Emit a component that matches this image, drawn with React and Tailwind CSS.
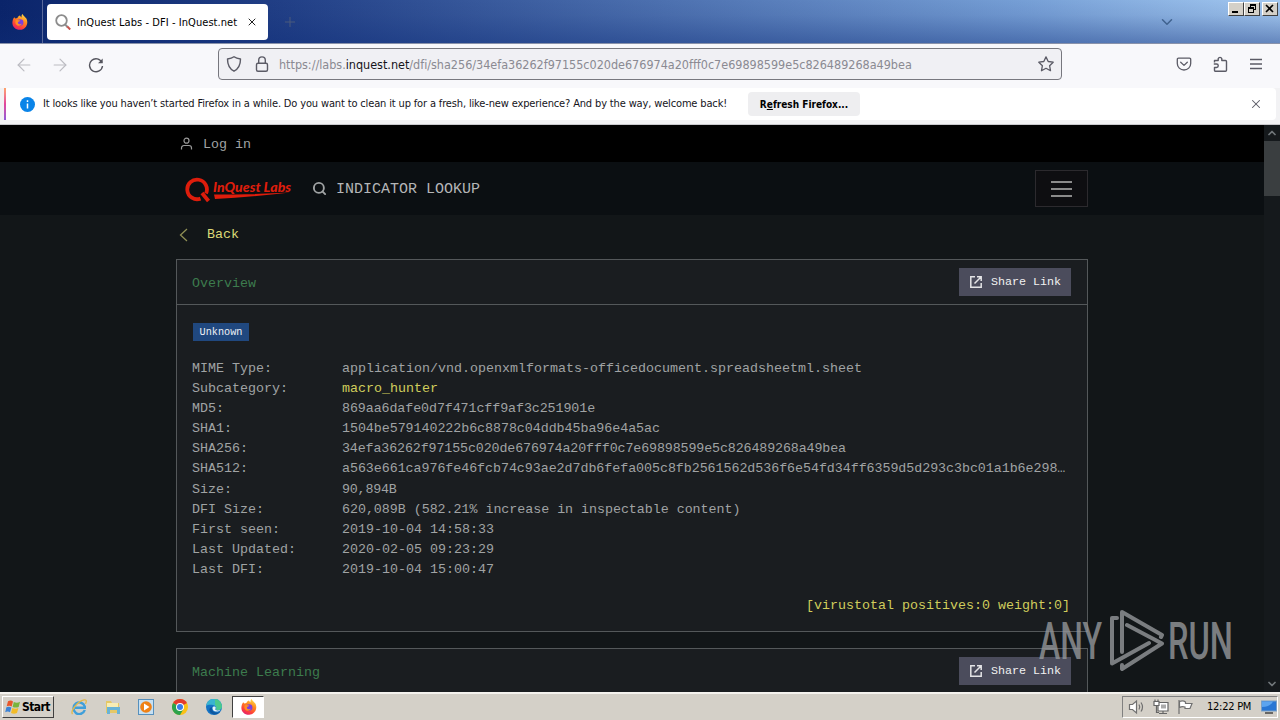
import React from 'react';
import { ArrowLeft, ArrowRight, ChevronDown, ChevronUp, Plus, Search, X } from 'lucide-react';

const details = [
  { label: 'MIME Type:', value: 'application/vnd.openxmlformats-officedocument.spreadsheetml.sheet' },
  { label: 'Subcategory:', value: 'macro_hunter', style: 'text-[#d0cd5c]' },
  { label: 'MD5:', value: '869aa6dafe0d7f471cff9af3c251901e', style: 'tracking-[-0.09px]' },
  { label: 'SHA1:', value: '1504be579140222b6c8878c04ddb45ba96e4a5ac', style: 'tracking-[-0.05px]' },
  { label: 'SHA256:', value: '34efa36262f97155c020de676974a20fff0c7e69898599e5c826489268a49bea', style: 'tracking-[-0.125px]' },
  { label: 'SHA512:', value: 'a563e661ca976fe46fcb74c93ae2d7db6fefa005c8fb2561562d536f6e54fd34ff6359d5d293c3bc01a1b6e298…', style: 'tracking-[-0.05px]' },
  { label: 'Size:', value: '90,894B', style: 'tracking-[-0.2px]' },
  { label: 'DFI Size:', value: '620,089B (582.21% increase in inspectable content)', style: 'tracking-[-0.03px]' },
  { label: 'First seen:', value: '2019-10-04 14:58:33' },
  { label: 'Last Updated:', value: '2020-02-05 09:23:29' },
  { label: 'Last DFI:', value: '2019-10-04 15:00:47' },
];

const FirefoxIcon = ({ id }) => (
  <svg className="w-4 h-4" viewBox="0 0 16 16">
    <defs>
      <linearGradient id={id} x1="0.8" y1="0" x2="0.3" y2="1">
        <stop offset="0" stopColor="#ffe24a" />
        <stop offset="0.4" stopColor="#ff8a1f" />
        <stop offset="0.75" stopColor="#ff4238" />
        <stop offset="1" stopColor="#e3206f" />
      </linearGradient>
    </defs>
    <path
      d="M2.2 3.2 3.4 4.6C4 4.2 4.8 4 5.4 4 6 2.6 7 1.8 8 1.6 8.2 2.4 8.8 3 9.6 3.4 9.2 2 9.6.8 10.6 0c.6 2 2.2 2.4 3 3.8.6.4 1 1 1.2 1.6 1.8 5-1.6 10.2-6.6 10.4C3.6 16 .2 12.6.4 8.6.5 6.5 1 4.8 2.2 3.2z"
      fill={`url(#${id})`}
    />
    <circle cx="8.200" cy="8.400" r="3.200" fill="#7a3fe0" />
    <path d="M3.800 6.200C5.200 5.600 7 6 8.400 6.600 7.600 7.800 6 7.600 5.800 8.800c.4 1.600 2.600 2 4 .8-.8 2.600-4.600 3-6 .4-.6-1.200-.6-2.600 0-3.800z" fill="#ff8f24" />
  </svg>
);

const ShareButton = () => (
  <button className="flex items-center w-28 h-7 pl-[10px] bg-[#4b4c5c] text-[#f2f2f2] text-[11.7px]">
    <svg className="w-[14px] h-[14px] mr-2" viewBox="0 0 14 14" fill="none" stroke="#e4e4e6" strokeWidth="1.5">
      <path d="M6 1.800H1.800v10.400h10.400V8M8 1.800h4.200V6M12 2 5.500 8.500" />
    </svg>
    <span className="pt-[2px]">Share Link</span>
  </button>
);

const TitleBar = () => (
  <div className="relative flex h-11 border-b border-[#8992aa] bg-[linear-gradient(to_bottom,rgba(15,40,110,0)_0%,rgba(15,40,110,0.08)_35%,rgba(15,45,120,0.42)_100%),linear-gradient(to_right,#0a246a_0%,#213f86_22%,#4d71b0_52%,#769fd6_80%,#a3c8f0_100%)]">
    <div className="w-[43px] h-[43px] pl-3 pt-[14px] border-r border-[#59699b]">
      <FirefoxIcon id="fxTab" />
    </div>
    <div className="mt-1 ml-1 w-[221px] h-9 rounded bg-white flex items-center pl-2">
      <svg className="w-4 h-4" viewBox="0 0 16 16" fill="none">
        <circle cx="6.500" cy="6.500" r="5.300" stroke="#8c8c8c" strokeWidth="1.800" />
        <path d="M10.500 10.800 12.500 13" stroke="#8c8c8c" strokeWidth="2" />
        <path d="M12.300 12.500 15.200 15.500" stroke="#c8534e" strokeWidth="2" />
      </svg>
      <span className="ml-[6px] mt-[2px] w-[161px] text-[11px] text-black tracking-[0.06px] whitespace-nowrap">InQuest Labs - DFI - InQuest.net</span>
      <X className="ml-[8px] w-3 h-3 text-[#222]" strokeWidth={2} />
    </div>
    <Plus className="mt-[14px] ml-[14px] w-4 h-4 text-[#4a5a7d]" strokeWidth={1.500} />
    <ChevronDown className="mt-[13px] ml-auto mr-[104px] w-[18px] h-[18px] text-[#40628f]" strokeWidth={2} />
    <div className="absolute right-[2px] top-[2px] flex">
      {['min', 'restore', 'close'].map((kind) => (
        <div
          key={kind}
          className={`w-4 h-[14px] bg-[#d4d0c8] border border-t-white border-l-white border-r-[#404040] border-b-[#404040] ${kind === 'close' ? 'ml-[2px]' : ''}`}
        >
          <svg className="w-[14px] h-3" viewBox="0 0 14 12" fill="none" stroke="#000" shapeRendering="crispEdges">
            {kind === 'min' && <path d="M3 9h6" strokeWidth="2" />}
            {kind === 'restore' && <path d="M5.500 4V1.500h5v5H9M5 2h6M3.500 4.500h5v5h-5zM3 5h6" />}
            {kind === 'close' && <path d="M3 2l7 7M10 2 3 9" strokeWidth="1.600" shapeRendering="auto" />}
          </svg>
        </div>
      ))}
    </div>
  </div>
);

const NavBar = () => (
  <div className="flex items-center h-11 bg-[#f8f8fb] pb-1">
    <ArrowLeft className="ml-[14px] mt-[2px] w-5 h-5 text-[#bcbcc2]" strokeWidth={1.400} />
    <ArrowRight className="ml-4 mt-[2px] w-5 h-5 text-[#bcbcc2]" strokeWidth={1.400} />
    <svg className="ml-[18px] mt-[2px] w-4 h-4" viewBox="0 0 16 16" fill="none" stroke="#55555e" strokeWidth="1.400">
      <path d="M14 5.600A6.500 6.500 0 1 0 14.500 9" />
      <path d="M14.700 1.500v4.700H10z" fill="#55555e" stroke="none" />
    </svg>
    <div className="ml-[114px] w-[844px] h-8 rounded border border-[#77777e] bg-[#f0f0f4] flex items-center">
      <svg className="ml-[7px] w-4 h-4" viewBox="0 0 16 16" fill="none" stroke="#5b5b66" strokeWidth="1.400" strokeLinejoin="round">
        <path d="M8 .8C6.200 2.200 3.800 2.800 1.500 3c0 5.500 1.500 9.600 6.500 12.200C13 12.600 14.500 8.500 14.500 3 12.200 2.800 9.800 2.200 8 .8z" />
      </svg>
      <svg className="ml-3 w-4 h-4" viewBox="0 0 16 16" fill="none" stroke="#5b5b66" strokeWidth="1.400">
        <rect x="2.500" y="7.200" width="11" height="8" rx="1.500" />
        <path d="M4.700 7V4.200a3.300 3.300 0 0 1 6.600 0V7" />
      </svg>
      <span className="ml-[9px] mt-[2px] text-[12.500px] text-[#8a8a92] whitespace-nowrap tracking-[-0.015px]">
        https://labs.<span className="text-[#15141a]">inquest.net</span>/dfi/sha256/34efa36262f97155c020de676974a20fff0c7e69898599e5c826489268a49bea
      </span>
      <svg className="ml-auto mr-[7px] w-4 h-4" viewBox="0 0 16 16" fill="none" stroke="#5b5b66" strokeWidth="1.300" strokeLinejoin="round">
        <path d="m8 .9 2.200 4.600 5 .7-3.600 3.500.9 5L8 12.300l-4.500 2.400.9-5L.8 6.200l5-.7z" />
      </svg>
    </div>
    <svg className="ml-[114px] w-4 h-4" viewBox="0 0 16 16" fill="none" stroke="#5b5b66" strokeWidth="1.300" strokeLinecap="round" strokeLinejoin="round">
      <path d="M2.500 2.200h11A1.200 1.200 0 0 1 14.700 3.400V7.500a6.700 6.500 0 0 1-13.400 0V3.400A1.200 1.200 0 0 1 2.500 2.200zM4.700 6.300 8 9.400l3.300-3.100" />
    </svg>
    <svg className="ml-5 w-4 h-4" viewBox="0 0 16 16" fill="none" stroke="#5b5b66" strokeWidth="1.400" strokeLinejoin="round">
      <path d="M2.500 6.500V4.500h3.700V2.700a1.900 1.900 0 0 1 3.600 0v1.800H13.500a1 1 0 0 1 1 1V14.300a1 1 0 0 1-1 1H3.500a1 1 0 0 1-1-1V11.500h2a1.700 1.700 0 0 0 0-3.500H1.800" />
    </svg>
    <svg className="ml-5 w-4 h-4" viewBox="0 0 16 16" stroke="#5b5b66" strokeWidth="1.300">
      <path d="M2 3.500h12M2 8h12M2 12.500h12" />
    </svg>
  </div>
);

const Notification = () => (
  <div className="h-[37px] bg-[#f2f2f4] border-b border-[#c9c9cd]">
    <div className="flex items-center h-8 ml-1 mr-1 rounded bg-white">
      <div className="w-[2px] h-8 bg-gradient-to-b from-[#ffa36a] via-[#e2459b] to-[#9059d8]" />
      <svg className="ml-[14px] w-[15px] h-[15px]" viewBox="0 0 15 15">
        <circle cx="7.500" cy="7.500" r="7.500" fill="#0a84e8" />
        <path d="M7.500 6.500v5M7.500 3.300v1.600" stroke="#fff" strokeWidth="1.500" />
      </svg>
      <span className="ml-2 w-[685px] text-[11px] text-[#15141a] whitespace-nowrap tracking-[-0.148px]">
        It looks like you haven’t started Firefox in a while. Do you want to clean it up for a fresh, like-new experience? And by the way, welcome back!
      </span>
      <button className="ml-5 w-28 h-6 rounded bg-[#eeeef0] text-[10px] font-bold text-black">
        R<u>e</u>fresh Firefox...
      </button>
      <X className="ml-auto mr-[13px] w-[14px] h-[14px] text-[#5b5b66]" strokeWidth={1.800} />
    </div>
  </div>
);

const CardHeader = ({ title }) => (
  <div className="flex items-center justify-between h-[44px] pl-[15px] pr-4">
    <h2 className="pt-[3px] text-[#3d7c4e]">{title}</h2>
    <ShareButton />
  </div>
);

const WebPage = () => (
  <div className="flex h-[567px] overflow-hidden bg-[#121618]">
    <div className="w-[1264px] font-['Liberation_Mono',monospace] text-[13.333px] text-[#a0a3a4]">
      <div className="h-[37px] bg-black">
        <div className="w-[912px] h-full mx-auto flex items-center pl-1">
          <svg className="w-[13px] h-[13px] mr-[10px]" viewBox="0 0 13 13" fill="none" stroke="#999" strokeWidth="1.200">
            <circle cx="6.500" cy="3.700" r="2.500" />
            <path d="M1.500 12.500V11a2.500 2.500 0 0 1 2.500-2.500h5a2.500 2.500 0 0 1 2.500 2.500v1.500" />
          </svg>
          <span className="pt-[2px]">Log in</span>
        </div>
      </div>
      <div className="h-[53px] bg-[#0b0f12]">
        <div className="w-[912px] h-full mx-auto flex items-center">
          <svg className="ml-[9px] w-[108px] h-[28px]" viewBox="0 0 108 28">
            <path d="M15.500 23.600A9.800 9.800 0 1 1 21 18.500" fill="none" stroke="#dd1d0c" strokeWidth="3.800" />
            <path d="M17 18 23.500 26" stroke="#dd1d0c" strokeWidth="3.800" />
            <text x="28" y="16.500" textLength="78" lengthAdjust="spacingAndGlyphs" fill="#dd1d0c" fontFamily="Lato" fontSize="13" fontWeight="900" fontStyle="italic">InQuest Labs</text>
            <path d="M29 19.500Q70 19.500 105 17.500Q65 22 30 24z" fill="#dd1d0c" />
          </svg>
          <Search className="ml-[19px] w-[15px] h-[15px] text-[#a0a3a4]" strokeWidth={3} />
          <span className="ml-[9px] pt-[3px] text-[15px] text-[#b4b6b7]">INDICATOR LOOKUP</span>
          <button className="ml-auto w-[53px] h-[37px] border border-[#2c2a2e] bg-[#0e0e11] flex flex-col items-center justify-center gap-[5px]">
            <span className="w-[21px] h-[2px] bg-[#8b8b8b]" />
            <span className="w-[21px] h-[2px] bg-[#8b8b8b]" />
            <span className="w-[21px] h-[2px] bg-[#8b8b8b]" />
          </button>
        </div>
      </div>
      <div className="w-[912px] mx-auto">
        <div className="flex items-center h-[44px] pb-1 text-[#dcd977]">
          <svg className="ml-[3px] mr-[19px] w-[9px] h-[14px]" viewBox="0 0 9 14" fill="none" stroke="#8f8f55" strokeWidth="1.300">
            <path d="M8 1 1.500 7 8 13" />
          </svg>
          Back
        </div>
        <div className="h-[373px] border border-[#54585a] bg-[#1a1d20]">
          <CardHeader title="Overview" />
          <div className="border-t border-[#54585a] pt-[18px] px-[15px]">
            <div className="ml-px w-14 h-[18px] bg-[#20487f] text-[#eef1f5] text-[10.200px] leading-[20px] text-center">Unknown</div>
            <div className="mt-[17.500px]">
              {details.map((row) => (
                <div key={row.label} className="flex h-[20.170px] items-center">
                  <span className="w-[150px] shrink-0">{row.label}</span>
                  <span className={row.style}>{row.value}</span>
                </div>
              ))}
            </div>
            <div className="mt-[16px] mr-[2px] text-right text-[#d0cd5c]">[virustotal positives:0 weight:0]</div>
          </div>
        </div>
        <div className="mt-4 h-[60px] border border-[#54585a] bg-[#1a1d20]">
          <CardHeader title="Machine Learning" />
        </div>
      </div>
    </div>
    <div className="w-4 bg-[#15191c] flex flex-col items-center">
      <ChevronUp className="w-3 h-4 text-[#70767a]" strokeWidth={3.500} />
      <div className="w-4 h-[55px] bg-[#3a3e40]" />
      <ChevronDown className="mt-auto w-3 h-4 text-[#70767a]" strokeWidth={3.500} />
    </div>
  </div>
);

const Watermark = () => (
  <svg className="absolute left-[1036px] top-[600px] w-[200px] h-[80px] opacity-80" viewBox="1036 600 200 80" fill="none" stroke="#94979a" strokeWidth="4" strokeLinejoin="round" strokeLinecap="round">
    <text x="1039" y="659" textLength="63" lengthAdjust="spacingAndGlyphs" fill="#94979a" stroke="none" fontFamily="Roboto" fontSize="51" fontWeight="500">ANY</text>
    <path d="M1117 618H1112V663.500L1149 643M1122 652V612L1162 635 1161 637M1127 625 1162 643.500 1122 669V665" />
    <text x="1168" y="659" textLength="65" lengthAdjust="spacingAndGlyphs" fill="#94979a" stroke="none" fontFamily="Roboto" fontSize="51" fontWeight="500">RUN</text>
  </svg>
);

const Taskbar = () => (
  <div className="flex items-center h-7 bg-[#d4d0c8] border-t-2 border-[#f4f2ee] text-[11px] text-black">
    <button className="ml-[2px] w-[52px] h-[22px] flex items-center pl-[2px] border border-t-white border-l-white border-r-[#404040] border-b-[#404040] text-[12px] font-bold tracking-[-0.6px]">
      <svg className="w-4 h-4 mr-px shrink-0" viewBox="0 0 16 16">
        <path d="M3 2.200Q6 .8 8 2.500L6.700 7.500Q4.500 6 1.700 7.200z" fill="#e8572b" />
        <path d="M8.800 3Q12 4.400 15 2.800L13.700 8Q11 9.200 7.600 8z" fill="#79b43c" />
        <path d="M1.400 8.200Q4 7 6.400 8.500L5 13.300Q3 12 .2 13.200z" fill="#3c83d6" />
        <path d="M7.300 9Q10.500 10.300 13.400 9L12 14Q9 15.400 6 14z" fill="#f3bc28" />
      </svg>
      Start
    </button>
    <svg className="ml-[17px] w-4 h-4" viewBox="0 0 16 16" fill="none">
      <path d="M13.800 11A5.800 5.800 0 1 1 13.800 7.500v1.200H4" stroke="#3f9fda" strokeWidth="2.400" />
      <path d="M1.500 15.200C-1 12 7 2 13 .9c3-.5 2.500 2 1.500 4" stroke="#e2b84a" strokeWidth="1.300" />
    </svg>
    <svg className="ml-[18px] w-4 h-4" viewBox="0 0 16 16">
      <path d="M1 2h5l1 2h7v10H1z" fill="#e5c866" />
      <path d="M2 4h11v5H2z" fill="#f8edb4" />
      <path d="M2 8h13v7h-3v-4H5v4H2z" fill="#69b3d6" />
    </svg>
    <svg className="ml-[17px] w-4 h-4" viewBox="0 0 16 16">
      <rect x=".5" y=".5" width="15" height="15" fill="#c7e0f2" stroke="#5690bd" />
      <circle cx="8" cy="8" r="5.800" fill="#ef8115" />
      <path d="M6 4.500v7L11.500 8z" fill="#fff" />
    </svg>
    <svg className="ml-[18px] w-4 h-4" viewBox="0 0 16 16">
      <circle cx="8" cy="8" r="8" fill="#fbc116" />
      <path d="M8 8 1.070 4A8 8 0 0 1 14.930 4z" fill="#e33b2e" />
      <path d="M8 8 1.070 4A8 8 0 0 0 8 16l3.500-6z" fill="#2ba24c" />
      <circle cx="8" cy="8" r="4" fill="#fff" />
      <circle cx="8" cy="8" r="3" fill="#3a7de8" />
    </svg>
    <svg className="ml-[18px] w-4 h-4" viewBox="0 0 16 16">
      <circle cx="8" cy="8" r="8" fill="#1473c4" />
      <path d="M.3 7A7.800 7.800 0 0 1 15.900 7.500C16 10.500 13 11.500 10 10.800 11 9 9.500 6 6 5.800 3 5.600 1 6 .3 7z" fill="#39b4d0" />
      <path d="M9 .1A7.800 7.800 0 0 1 15.900 7.500C16 10.500 13 11.500 10 10.800 11 9 10.500 7 9 6z" fill="#4cc98c" />
      <path d="M6 8c-1 4 3 7 8 5-3 3.500-8 3-10 0-1.300-2-.5-4.500 2-5z" fill="#0c57a0" />
      <path d="M6.500 8.500c.5-1.500 3-1.500 3.300 0 0 1-.8 1.700-.3 2.300.8.8 3 1 4.800.3-1 2-6 2-7.300-.2-.4-.8-.6-1.600-.5-2.400z" fill="#e8f4f8" />
    </svg>
    <div className="ml-[10px] w-8 h-[22px] bg-white border border-t-[#404040] border-l-[#404040] border-r-white border-b-white flex items-center justify-center pl-px">
      <FirefoxIcon id="fxTask" />
    </div>
    <div className="ml-auto mr-[2px] w-[156px] h-[22px] border border-t-[#808080] border-l-[#808080] border-r-white border-b-white flex items-center">
      <svg className="ml-[5px] w-[18px] h-4" viewBox="0 0 18 16" fill="none" stroke="#707070" strokeWidth="1.200">
        <path d="M1.500 5.500h3l4-3.500v12l-4-3.500h-3z" fill="#fff" />
        <path d="M11 5.500q1.500 2.500 0 5M13 3.500q3 4.500 0 9" />
      </svg>
      <svg className="ml-[7px] w-4 h-4" viewBox="0 0 16 16" fill="#fff" stroke="#666" strokeWidth="1.200">
        <path d="M5 3.500h10v8.500H5zM6 14.500h8M10 12v2.500" />
        <path d="M8 5.500h5v4H8z" fill="#aaa" stroke="none" />
        <path d="M1 2.500h5v4H1zM2 .5v2M5 .5v2" />
        <path d="M3.500 7v6.500H6" fill="none" />
      </svg>
      <svg className="ml-2 w-4 h-4" viewBox="0 0 16 16" fill="#fff" stroke="#707070" strokeWidth="1.200">
        <path d="M2 1v14M2.500 2.500Q6 1 8.500 3v1.500h6.500l-2 5H8V8Q5 7 2.500 8.500z" />
      </svg>
      <span className="ml-[14px] w-[46px] pt-px whitespace-nowrap tracking-[-0.25px]">12:22 PM</span>
      <svg className="ml-[8px] w-4 h-[14px]" viewBox="0 0 16 14">
        <rect x=".5" y="1" width="15" height="10" fill="#2876d4" stroke="#7a9fc4" />
        <path d="M1 7Q9 7 12 1.500H1z" fill="#5ca4ef" />
        <path d="M4 13h8" stroke="#444" strokeWidth="1.500" />
      </svg>
    </div>
  </div>
);

const App = () => {
  return (
    <div className="relative w-[1280px] h-[720px] overflow-hidden font-['DejaVu_Sans_Condensed','DejaVu_Sans',sans-serif]">
      <TitleBar />
      <NavBar />
      <Notification />
      <WebPage />
      <Taskbar />
      <Watermark />
    </div>
  );
};

export default App;
